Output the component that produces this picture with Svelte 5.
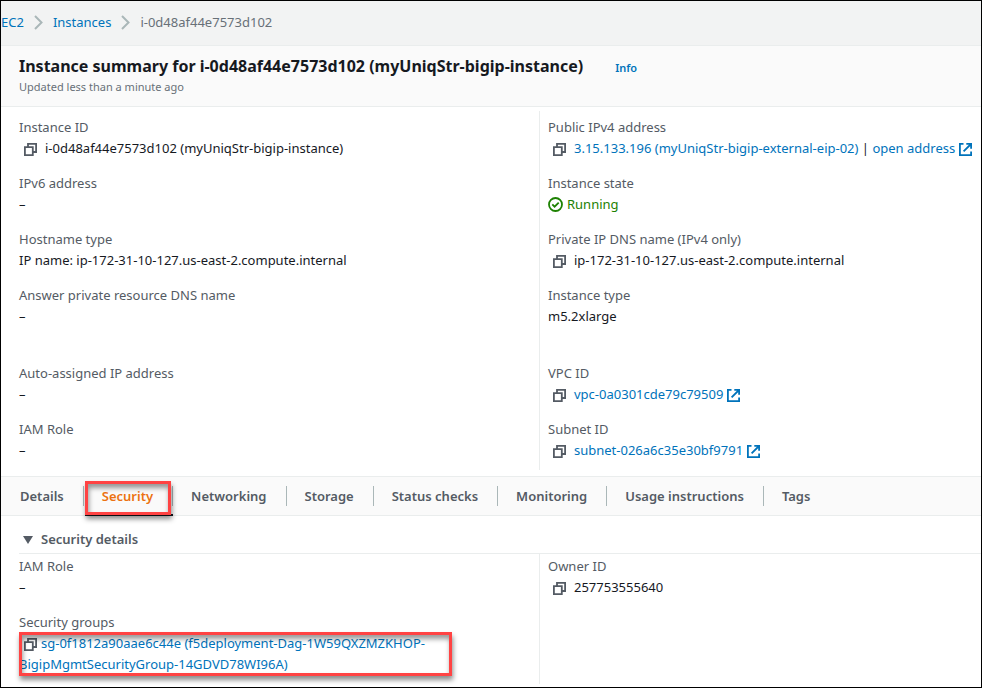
<script>
  const summaryLeft = [
    [
      { label: 'Instance ID', value: 'i-0d48af44e7573d102 (myUniqStr-bigip-instance)', copy: true },
      { label: 'IPv6 address', value: '–' },
      { label: 'Hostname type', value: 'IP name: ip-172-31-10-127.us-east-2.compute.internal' },
      { label: 'Answer private resource DNS name', value: '–' }
    ],
    [
      { label: 'Auto-assigned IP address', value: '–' },
      { label: 'IAM Role', value: '–' }
    ]
  ];

  const summaryRight = [
    [
      {
        label: 'Public IPv4 address',
        link: '3.15.133.196 (myUniqStr-bigip-external-eip-02)',
        open: 'open address',
        copy: true
      },
      { label: 'Instance state', state: 'Running' },
      { label: 'Private IP DNS name (IPv4 only)', value: 'ip-172-31-10-127.us-east-2.compute.internal', copy: true },
      { label: 'Instance type', value: 'm5.2xlarge' }
    ],
    [
      { label: 'VPC ID', link: 'vpc-0a0301cde79c79509', external: true, copy: true },
      { label: 'Subnet ID', link: 'subnet-026a6c35e30bf9791', external: true, copy: true }
    ]
  ];

  const securityLeft = [
    [
      { label: 'IAM Role', value: '–' },
      {
        label: 'Security groups',
        link: 'sg-0f1812a90aae6c44e (f5deployment-Dag-1W59QXZMZKHOP-BigipMgmtSecurityGroup-14GDVD78WI96A)',
        copy: true,
        marked: true
      }
    ]
  ];

  const securityRight = [[{ label: 'Owner ID', value: '257753555640', copy: true }]];

  const tabs = [
    'Details',
    'Security',
    'Networking',
    'Storage',
    'Status checks',
    'Monitoring',
    'Usage instructions',
    'Tags'
  ];
  let active = $state('Security');
  let expanded = $state(true);
</script>

{#snippet copyButton(label)}
  <button class="copy" type="button" aria-label={`Copy ${label}`}>
    <svg viewBox="0 0 13 13" width="13" height="13" fill="none" stroke="currentColor" stroke-width="1.8">
      <path d="M0.9 4.2h7.9v7.9H0.9z" />
      <path d="M4 4V0.9h8.1V9H9" />
    </svg>
  </button>
{/snippet}

{#snippet externalIcon()}
  <svg class="external" viewBox="0 0 13 13" width="13" height="13" fill="none" stroke="currentColor" stroke-width="1.8" aria-hidden="true">
    <path d="M4.5 0.9H0.9v11.2h11.2V8.5" />
    <path d="M7.3 0.9h4.8v4.8M12 1L4.6 8.4" />
  </svg>
{/snippet}

{#snippet column(groups)}
  <div class="column">
    {#each groups as group}
      <dl>
        {#each group as field}
          <div class="field">
            <dt>{field.label}</dt>
            <dd class:marked={field.marked}>
              {#if field.copy}{@render copyButton(field.label)}{/if}{#if field.link}<a href="#resource">{field.link}{#if field.external}{@render externalIcon()}{/if}</a>{/if}{#if field.open}{' | '}<a href="#open">{field.open}{@render externalIcon()}</a>{/if}{#if field.state}<span class="state"><svg viewBox="0 0 15 15" width="15" height="15" fill="none" stroke="currentColor" stroke-width="1.8" aria-hidden="true"><circle cx="7.5" cy="7.5" r="6.5" /><path d="M4.3 7.4l2.3 2.3 4.1-4.1" /></svg>{field.state}</span>{/if}{#if field.value}<span>{field.value}</span>{/if}
            </dd>
          </div>
        {/each}
      </dl>
    {/each}
  </div>
{/snippet}

<main>
  <nav class="crumbs" aria-label="Breadcrumb">
    <a href="#ec2">EC2</a>
    <svg viewBox="0 0 9 15" width="9" height="15" fill="none" stroke="currentColor" stroke-width="2" aria-hidden="true"><path d="M1 1l6.5 6.5L1 14" /></svg>
    <a href="#instances">Instances</a>
    <svg viewBox="0 0 9 15" width="9" height="15" fill="none" stroke="currentColor" stroke-width="2" aria-hidden="true"><path d="M1 1l6.5 6.5L1 14" /></svg>
    <span>i-0d48af44e7573d102</span>
  </nav>

  <header>
    <div class="title">
      <h1>Instance summary for i-0d48af44e7573d102 (myUniqStr-bigip-instance)</h1>
      <a href="#info">Info</a>
    </div>
    <p>Updated less than a minute ago</p>
  </header>

  <section class="columns summary">
    {@render column(summaryLeft)}
    {@render column(summaryRight)}
  </section>

  <div class="tabs" role="tablist">
    {#each tabs as tab}
      <div class="tab" class:active={active === tab} class:marked={tab === 'Security'}>
        <button type="button" role="tab" aria-selected={active === tab} onclick={() => (active = tab)}>{tab}</button>
      </div>
    {/each}
  </div>

  <section class="security">
    <h2>
      <button type="button" aria-expanded={expanded} onclick={() => (expanded = !expanded)}>
        <svg viewBox="0 0 10 8" width="10" height="8" aria-hidden="true"><path d="M0 0h10L5 8z" fill="currentColor" /></svg>
        Security details
      </button>
    </h2>
    {#if expanded}
      <div class="columns">
        {@render column(securityLeft)}
        {@render column(securityRight)}
      </div>
    {/if}
  </section>
</main>

<style>
  :global(body) {
    margin: 0;
    background: #fff;
  }

  main {
    box-sizing: border-box;
    min-height: 100vh;
    border: 1px solid #000;
    overflow: hidden;
    background: #fff;
    color: #16191f;
    font: 13px/21px 'Noto Sans', 'Open Sans', sans-serif;
  }

  a {
    color: #0073bb;
    text-decoration: none;
  }

  button {
    margin: 0;
    padding: 0;
    border: 0;
    background: none;
    color: inherit;
    font: inherit;
    cursor: pointer;
  }

  .crumbs {
    display: flex;
    align-items: center;
    gap: 10px;
    height: 42px;
    padding-bottom: 2px;
    border-bottom: 1px solid #eaeded;
    background: #f2f3f3;
    color: #687078;
  }

  .crumbs svg {
    color: #aab7b8;
  }

  header {
    padding: 8px 18px 10px;
    border-bottom: 1px solid #eaeded;
    background: #fafafa;
  }

  .title {
    display: flex;
    align-items: baseline;
    gap: 32px;
  }

  h1 {
    margin: 0;
    font-size: 16px;
    font-weight: 700;
    line-height: 24px;
  }

  .title a {
    font-size: 11px;
    font-weight: 600;
  }

  header p {
    margin: 0;
    color: #687078;
    font-size: 11px;
    line-height: 18px;
  }

  .columns {
    display: grid;
    grid-template-columns: 11fr 9fr;
  }

  .summary {
    padding: 4px 0 6px;
  }

  .column {
    min-width: 0;
    padding: 6px 18px 0;
    white-space: nowrap;
  }

  .column:first-child {
    border-right: 1px solid #eaeded;
    white-space: normal;
  }

  .column:last-child {
    padding: 6px 8px 0;
  }

  dl {
    margin: 0;
  }

  dl + dl {
    margin-top: 22px;
  }

  .field {
    padding-bottom: 14px;
  }

  dl:last-child .field:last-child {
    padding-bottom: 9px;
  }

  dt {
    color: #545b64;
  }

  dd {
    position: relative;
    margin: 0;
  }

  .copy {
    margin: 0 8px 0 5px;
    color: #545b64;
    vertical-align: -3px;
    line-height: 0;
  }

  .marked .copy {
    margin-right: 4px;
  }

  .external {
    margin-left: 4px;
    vertical-align: -3px;
  }

  .state {
    display: flex;
    align-items: center;
    gap: 4px;
    color: #1d8102;
  }

  .tabs {
    display: flex;
    height: 38px;
    padding-left: 1px;
    border-top: 1px solid #eaeded;
    border-bottom: 1px solid #eaeded;
    background: #fafafa;
    color: #545b64;
  }

  .tab {
    position: relative;
    display: flex;
    align-items: center;
  }

  .tab button {
    height: 20px;
    padding: 0 19px 0 18px;
    border-right: 1px solid #aab7b8;
    font-weight: 600;
    line-height: 18px;
    white-space: nowrap;
  }

  .tab:last-child button {
    border-right: 0;
  }

  .tab.active {
    color: #ec7211;
  }

  .tab.active::before {
    position: absolute;
    right: 0;
    bottom: -1px;
    left: 1px;
    height: 2px;
    background: #16191f;
    content: '';
  }

  /* Callout frames drawn over the highlighted tab and security group */
  .marked::after {
    position: absolute;
    box-sizing: border-box;
    border: 3px solid #ff4343;
    box-shadow: 1px 4px 5px rgba(0, 0, 0, 0.45), inset 1px 4px 5px rgba(0, 0, 0, 0.4);
    content: '';
    pointer-events: none;
  }

  .tab.marked::after {
    inset: 4px 2px 0 1px;
  }

  dd.marked::after {
    inset: -1px 69px -1px 0;
  }

  h2 {
    margin: 0 0 0 18px;
    padding: 13px 4px 3px;
    border-bottom: 1px solid #eaeded;
    color: #545b64;
    font-size: 13px;
    font-weight: 600;
    line-height: 21px;
  }

  h2 button {
    display: flex;
    align-items: center;
    gap: 8px;
  }

  .security .column {
    padding-top: 2px;
  }
</style>
